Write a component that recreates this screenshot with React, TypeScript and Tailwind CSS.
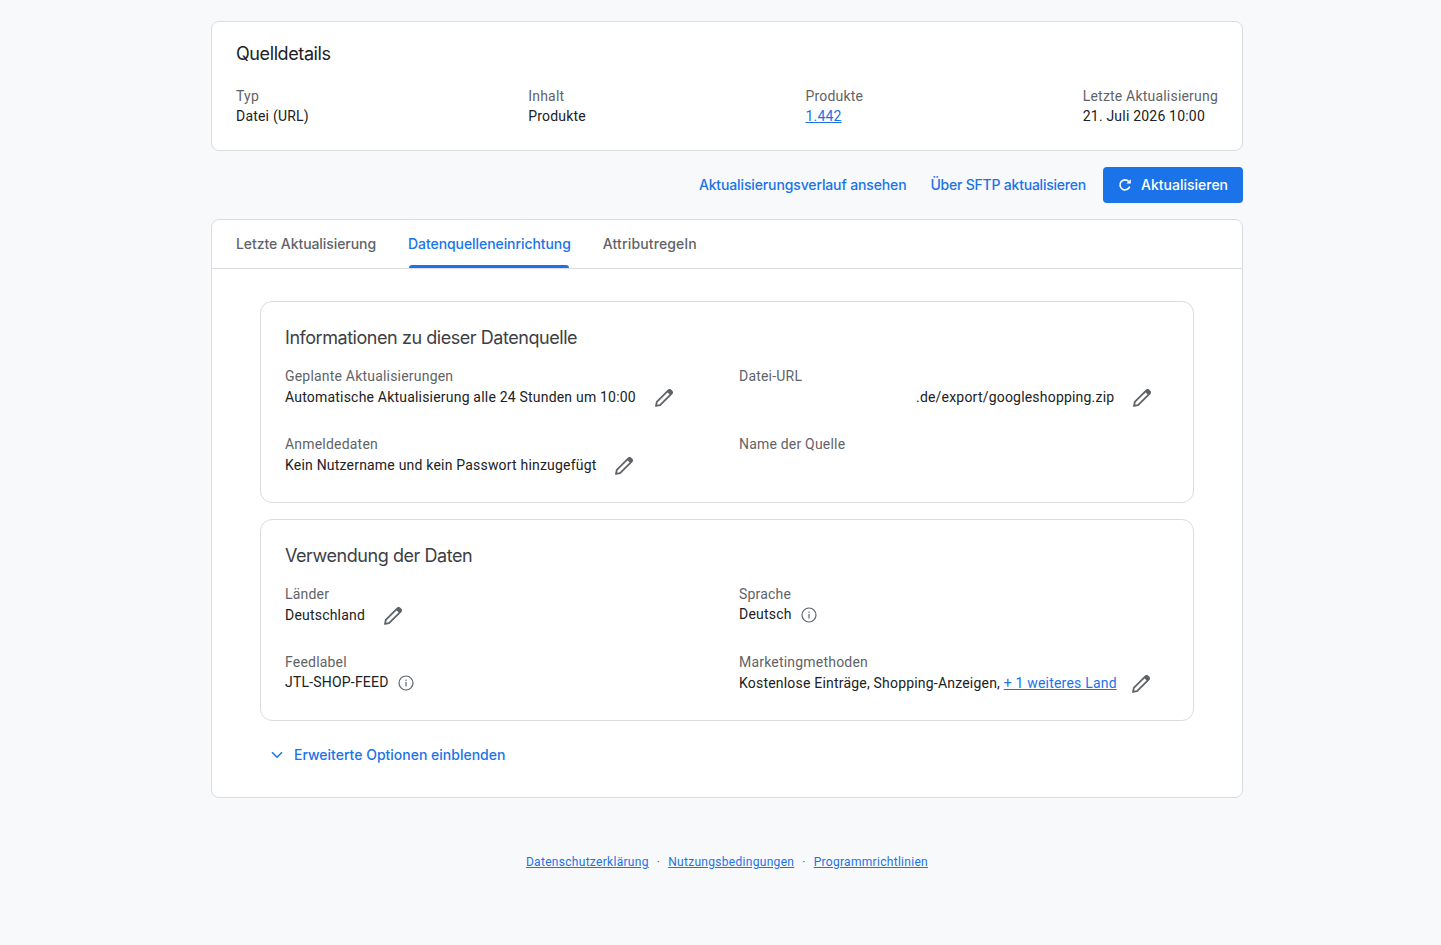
import React from "react";

const Pencil = () => (
  <svg viewBox="2 2 16 16" className="w-[18px] h-[18px] shrink-0 mt-[2px]" fill="none">
    <path d="M2.9 17.1l.7-3.6L13.9 3.2a1.4 1.4 0 0 1 2 0l.9.9a1.4 1.4 0 0 1 0 2L6.5 16.4l-3.6.7z" stroke="#5f6368" strokeWidth="1.6" strokeLinejoin="round" />
    <path d="M12.6 4.5l2.9 2.9L17 5.9a1.5 1.5 0 0 0 0-2.1l-.8-.8a1.5 1.5 0 0 0-2.1 0l-1.5 1.5z" fill="#5f6368" />
  </svg>
);

const Info = () => (
  <svg viewBox="0 0 16 16" className="w-4 h-4 shrink-0" fill="none">
    <circle cx="8" cy="8" r="7" stroke="#5f6368" strokeWidth="1.2" />
    <rect x="7.4" y="7" width="1.2" height="4.4" fill="#5f6368" />
    <rect x="7.4" y="4.6" width="1.2" height="1.3" fill="#5f6368" />
  </svg>
);

const Refresh = () => (
  <svg viewBox="0 0 16 16" className="w-4 h-4 shrink-0" fill="none">
    <path d="M12.7 9.6A5 5 0 1 1 11.6 4.4" stroke="#fff" strokeWidth="1.6" />
    <path d="M9.4 6.6h4.4V2.2z" fill="#fff" />
  </svg>
);

const Chevron = () => (
  <svg viewBox="0 0 12 8" className="w-3 h-2 shrink-0" fill="none">
    <path d="M1 1.2l5 5 5-5" stroke="#1a73e8" strokeWidth="1.5" />
  </svg>
);

const Field = ({ label, children, gap = "gap-[19px]" }: { label: string; children?: React.ReactNode; gap?: string }) => (
  <div className="h-[68px]">
    <div className="text-[14px] leading-5 tracking-[0.2px] text-[#5f6368]">{label}</div>
    {children && <div className={`flex items-center h-5 mt-[1px] text-[14px] tracking-[0.2px] text-[#202124] ${gap}`}>{children}</div>}
  </div>
);

const Summary = ({ label, children }: { label: string; children: React.ReactNode }) => (
  <div>
    <div className="text-[14px] leading-5 tracking-[0.2px] text-[#5f6368]">{label}</div>
    <div className="text-[14px] leading-5 tracking-[0.2px] text-[#202124]">{children}</div>
  </div>
);

export default function App() {
  return (
    <div className="min-h-[945px] bg-[#f8f9fa] pt-[21px] [font-family:Roboto,sans-serif]">
      <div className="w-[1032px] ml-[211px]">
        <section className="h-[130px] bg-white border border-[#dadce0] rounded-lg px-6 pt-[20px]">
          <h2 className="[font-family:Inter,sans-serif] text-[18px] leading-6 tracking-[-0.4px] text-[#202124]">Quelldetails</h2>
          <div className="flex justify-between mt-[20px]">
            <div className="w-[292px]"><Summary label="Typ">Datei (URL)</Summary></div>
            <div className="w-[277px]"><Summary label="Inhalt">Produkte</Summary></div>
            <div className="w-[277px]"><Summary label="Produkte"><a className="text-[#1a73e8] underline">1.442</a></Summary></div>
            <div className="whitespace-nowrap"><Summary label="Letzte Aktualisierung">21. Juli 2026 10:00</Summary></div>
          </div>
        </section>

        <div className="flex justify-end items-center h-9 mt-4 [font-family:Inter,sans-serif] text-[14px] font-medium text-[#1a73e8]">
          <a className="-mt-[2px] tracking-[-0.13px]">Aktualisierungsverlauf ansehen</a>
          <a className="ml-6 -mt-[2px] tracking-[-0.22px]">Über SFTP aktualisieren</a>
          <button className="ml-[17px] h-9 w-[140px] bg-[#1a73e8] text-white rounded flex items-center pl-[14px] gap-2 font-medium">
            <Refresh />
            <span className="-mt-[2px]">Aktualisieren</span>
          </button>
        </div>

        <section className="mt-4 h-[579px] bg-white border border-[#dadce0] rounded-lg">
          <div className="flex h-[49px] border-b border-[#dadce0] px-6 gap-8 [font-family:Inter,sans-serif] text-[14px] font-medium text-[#5f6368]">
            <div className="pt-[13px] tracking-[-0.07px]">Letzte Aktualisierung</div>
            <div className="relative pt-[13px] tracking-[-0.07px] text-[#1a73e8]">
              Datenquelleneinrichtung
              <div className="absolute left-[1px] right-[2px] bottom-0 h-[3px] rounded-t bg-[#1a73e8]"></div>
            </div>
            <div className="pt-[13px] tracking-[0.14px]">Attributregeln</div>
          </div>

          <div className="px-12 pt-8">
            <div className="h-[202px] border border-[#dadce0] rounded-xl px-6 pt-[24px]">
              <h3 className="[font-family:Inter,sans-serif] text-[18px] leading-6 tracking-[-0.45px] text-[#3c4043]">Informationen zu dieser Datenquelle</h3>
              <div className="grid grid-cols-[454px_1fr] mt-[16px]">
                <Field label="Geplante Aktualisierungen">Automatische Aktualisierung alle 24 Stunden um 10:00<Pencil /></Field>
                <Field label="Datei-URL"><span className="ml-[177px]">.de/export/googleshopping.zip</span><Pencil /></Field>
                <Field label="Anmeldedaten" gap="gap-[18px]">Kein Nutzername und kein Passwort hinzugefügt<Pencil /></Field>
                <Field label="Name der Quelle" />
              </div>
            </div>

            <div className="mt-4 h-[202px] border border-[#dadce0] rounded-xl px-6 pt-[24px]">
              <h3 className="[font-family:Inter,sans-serif] text-[18px] leading-6 tracking-[-0.45px] text-[#3c4043]">Verwendung der Daten</h3>
              <div className="grid grid-cols-[454px_1fr] mt-[16px]">
                <Field label="Länder">Deutschland<Pencil /></Field>
                <Field label="Sprache" gap="gap-[9px]"><span className="-mt-[2px]">Deutsch</span><Info /></Field>
                <Field label="Feedlabel" gap="gap-[9px]"><span className="-mt-[2px]">JTL-SHOP-FEED</span><Info /></Field>
                <Field label="Marketingmethoden" gap="gap-[15px]">
                  <span>Kostenlose Einträge, Shopping-Anzeigen, <a className="text-[#1a73e8] underline">+ 1 weiteres Land</a></span>
                  <Pencil />
                </Field>
              </div>
            </div>

            <div className="flex items-center mt-[24px] ml-[11px] gap-[11px] [font-family:Inter,sans-serif] text-[14px] leading-5 font-medium text-[#1a73e8]">
              <Chevron />
              Erweiterte Optionen einblenden
            </div>
          </div>
        </section>

        <footer className="flex justify-center items-center mt-[56px] text-[12px] leading-4 tracking-[0.3px] text-[#1a73e8] gap-[8px]">
          <a className="underline">Datenschutzerklärung</a>
          <span className="text-[#5f6368]">·</span>
          <a className="underline">Nutzungsbedingungen</a>
          <span className="text-[#5f6368]">·</span>
          <a className="underline">Programmrichtlinien</a>
        </footer>
      </div>
    </div>
  );
}
